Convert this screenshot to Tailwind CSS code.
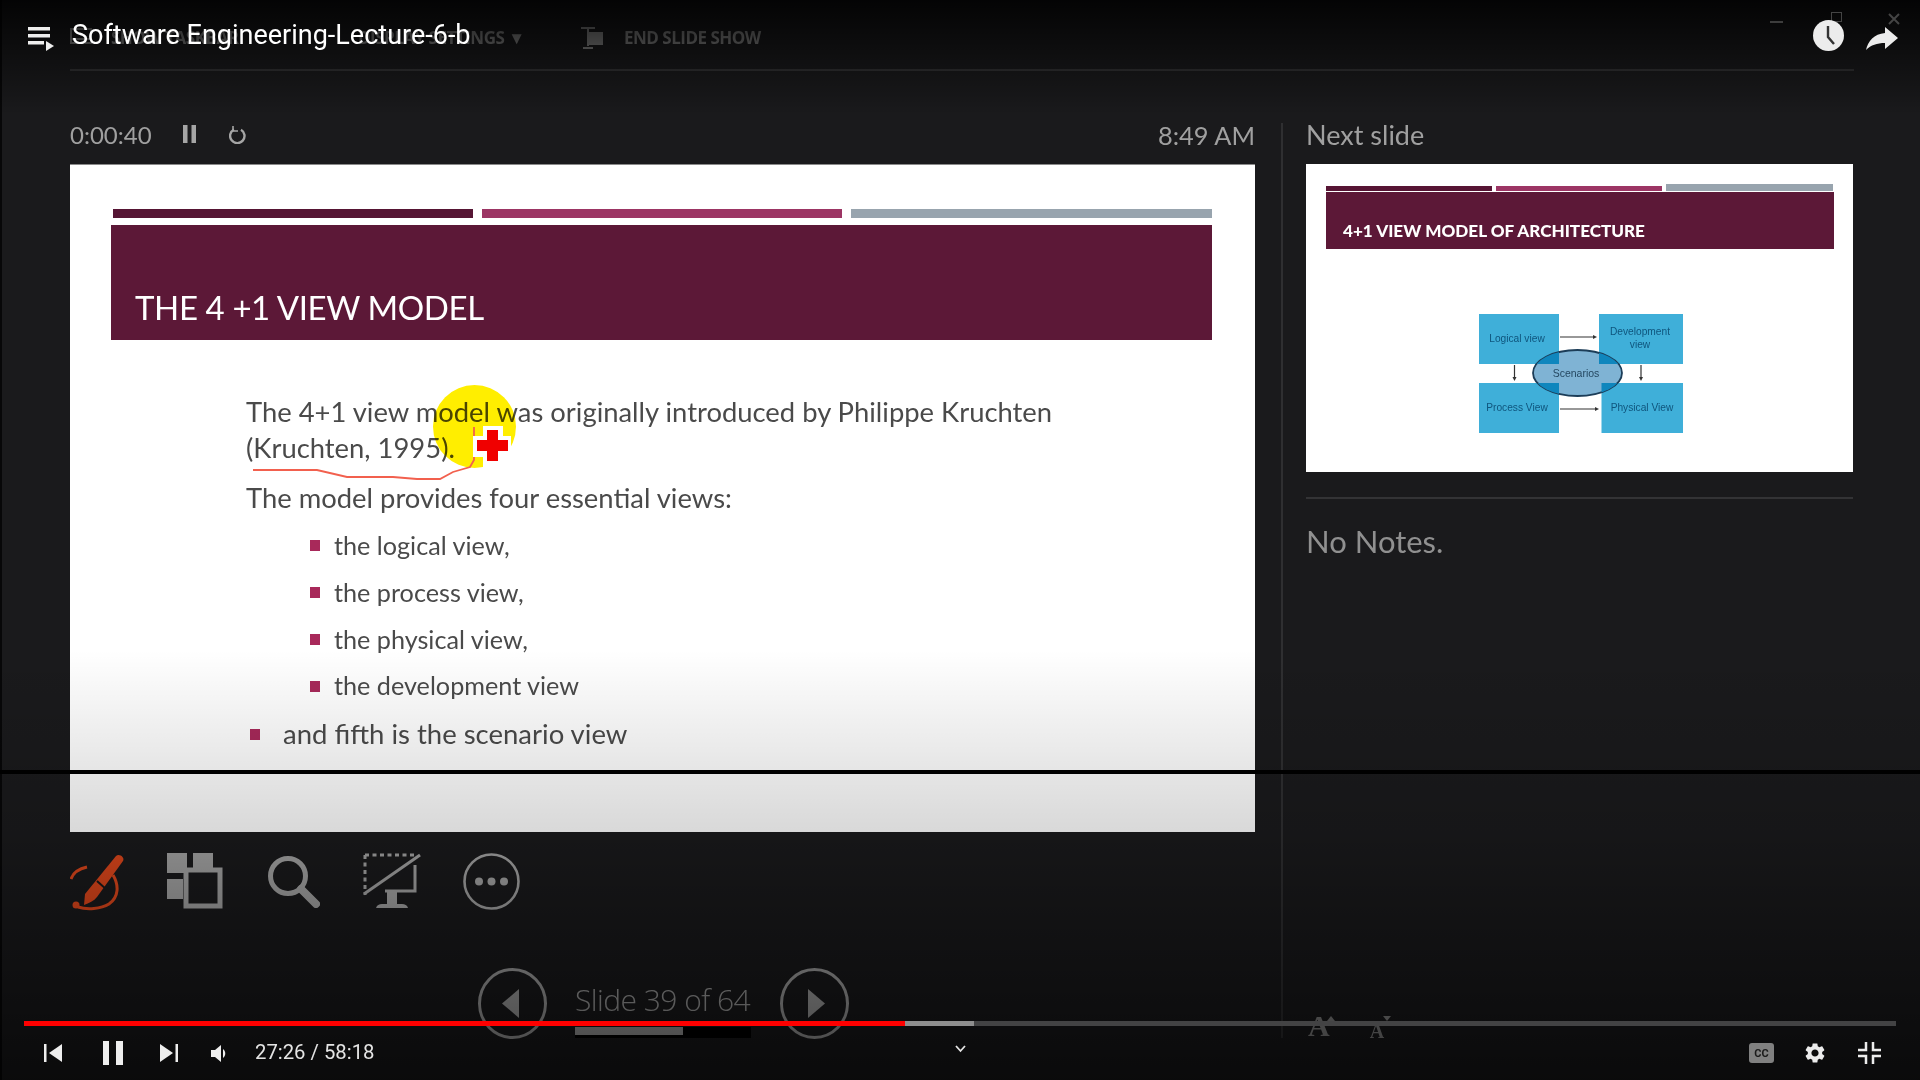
<!DOCTYPE html>
<html lang="en">
  <head>
    <meta charset="UTF-8" />
    <title>Software Engineering-Lecture-6-b</title>
    <script src="https://cdn.jsdelivr.net/npm/@tailwindcss/browser@4"></script>
  </head>
  <body class="bg-black">
    <div class="relative w-[1920px] h-[1080px] overflow-hidden bg-[#1a1a1c] pl-[70px] pr-[66px] font-['Lato',sans-serif]">
      <!-- presenter view: top menu -->
      <div class="h-[71px] border-b-2 border-[#333335] flex items-center pt-[7px] text-[#868686] font-['Open_Sans',sans-serif] font-bold text-[17px] tracking-[-0.5px]">
        <svg class="w-[23px] h-[22px]" viewBox="0 0 23 22" fill="none" stroke="#868686" stroke-width="2"><rect x="1" y="2" width="20" height="14" /><path d="M1 12h20" /></svg>
        <span class="ml-[18px] w-[215px]">SHOW TASKBAR</span>
        <span class="w-[190px] pl-[32px] whitespace-nowrap">DISPLAY SETTINGS ▼</span>
        <svg class="ml-[65px] w-[22px] h-[24px]" viewBox="0 0 22 24" fill="none" stroke="#8a8a8a" stroke-width="2"><path d="M0 2h14M7 2v18M2 22h10" /><rect x="9" y="7" width="12" height="11" fill="#8a8a8a" /></svg>
        <span class="ml-[21px]">END SLIDE SHOW</span>
      </div>

      <div class="flex h-[915px] mt-[52px]">
        <!-- current slide column -->
        <div class="w-[1185px]">
          <div class="h-[41px] flex items-start text-[#a0a0a0] leading-[24px]">
            <span class="text-[24px]">0:00:40</span>
            <svg class="ml-[31px] mt-[2px] w-[13px] h-[18px]" viewBox="0 0 13 18" fill="#a5a5a5"><rect width="4.500" height="18" /><rect x="8.500" width="4.500" height="18" /></svg>
            <svg class="ml-[33px] mt-[2px] w-[18px] h-[19px]" viewBox="0 0 18 19" fill="none" stroke="#a5a5a5" stroke-width="2.400"><path d="M5 4.500a7.200 7.200 0 1 0 7 .2" /><path d="M4 1v5h5" stroke-width="1.600" /></svg>
            <span class="ml-auto text-[25.4px]">8:49 AM</span>
          </div>

          <div class="relative h-[668px] bg-white border-t border-[#8a8a8a] pt-[44px] pl-[41px]">
            <div class="flex gap-[9px] pl-[2px] w-[1101px]">
              <div class="w-[360px] h-[9px] bg-[#561534]"></div>
              <div class="w-[360px] h-[9px] bg-[#9c3564]"></div>
              <div class="w-[361px] h-[9px] bg-[#98a4ae]"></div>
            </div>
            <div class="mt-[7px] w-[1101px] h-[115px] bg-[#5c1837] flex items-center pl-[24px] pt-[50px] text-white text-[33px] tracking-[-0.4px] whitespace-nowrap">THE 4 +1 VIEW MODEL</div>

            <div class="mt-[54px] ml-[135px] text-[#4a4a4a]">
              <p class="text-[27.4px] leading-[36px] whitespace-nowrap">The 4+1 view model was originally introduced by Philippe Kruchten<br />(Kruchten, 1995).</p>
              <p class="mt-[14px] text-[27.4px] leading-[36px] whitespace-nowrap">The model provides four essential views:</p>
              <ul class="mt-[6px] ml-[64px] text-[25.2px]">
                <li class="h-[47px] flex items-center gap-[14px]"><i class="w-[10px] h-[11px] bg-[#a8295a]"></i>the logical view,</li>
                <li class="h-[47px] flex items-center gap-[14px]"><i class="w-[10px] h-[11px] bg-[#a8295a]"></i>the process view,</li>
                <li class="h-[47px] flex items-center gap-[14px]"><i class="w-[10px] h-[11px] bg-[#a8295a]"></i>the physical view,</li>
                <li class="h-[46px] flex items-center gap-[14px]"><i class="w-[10px] h-[11px] bg-[#a8295a]"></i>the development view</li>
              </ul>
              <div class="mt-[7px] ml-[4px] h-[36px] flex items-center gap-[23px] text-[27.5px]"><i class="w-[10px] h-[11px] bg-[#a8295a]"></i>and fifth is the scenario view</div>
            </div>

            <!-- cursor highlight and pen stroke -->
            <div class="absolute left-[363px] top-[220px] w-[83px] h-[83px] rounded-full bg-[#ffee00] mix-blend-multiply"></div>
            <svg class="absolute -left-px top-0 w-[520px] h-[340px]" viewBox="0 0 520 340" fill="none">
              <path d="M184 305L248 305L278 312L324 312L348 314L371 314L384 307L401 302L405 295L405 262" stroke="#f2604e" stroke-width="1.800" />
              <path d="M404 271h10v-10h20v10h8v21h-8v10h-20v-10h-10z" fill="#fff" />
              <path d="M408 275h10v-10h11v10h10v11h-10v10h-11v-10h-10z" fill="#f00000" />
            </svg>
          </div>

          <!-- tools -->
          <div class="flex mt-[21px] h-[58px]">
            <svg class="w-[58px] h-[58px]" viewBox="0 0 58 58" fill="none">
              <path d="M17 14C8 16 3 20 1 26M43 22c6 10 6 22-4 29-8 5-22 6-31 3" stroke="#e2481c" stroke-width="3" />
              <path d="M46 3c3-3 9 1 7 5L27 44c-3 4-8 6-13 8l1-11z" fill="#e2481c" />
              <path d="M27 28l10 9" stroke="#1a1a1c" stroke-width="2" />
              <circle cx="6" cy="52" r="3.500" fill="#e2481c" />
            </svg>
            <svg class="ml-[39px] w-[56px] h-[56px]" viewBox="0 0 56 56" fill="none">
              <rect x="0" y="0" width="20" height="20" fill="#a6a6a6" /><rect x="26" y="0" width="20" height="16" fill="#a6a6a6" /><rect x="0" y="26" width="16" height="20" fill="#a6a6a6" />
              <rect x="19" y="17" width="34" height="36" stroke="#a6a6a6" stroke-width="5" fill="#1a1a1c" />
            </svg>
            <svg class="ml-[45px] mt-[3px] w-[52px] h-[52px]" viewBox="0 0 52 52" fill="none" stroke="#a6a6a6">
              <circle cx="20" cy="20" r="17.500" stroke-width="5" />
              <path d="M33 33l15 15" stroke-width="8" stroke-linecap="round" />
            </svg>
            <svg class="ml-[43px] w-[58px] h-[57px]" viewBox="0 0 58 57" fill="none" stroke="#a6a6a6">
              <path d="M2 2h52M2 2v40" stroke-width="3" stroke-dasharray="4 3.500" />
              <path d="M1 41L57 2" stroke-width="3" />
              <path d="M52 12v26H22" stroke-width="3" />
              <path d="M24 38h10v13H24z" fill="#a6a6a6" stroke="none" />
              <path d="M13 55c1-3 3-4 6-4h20c3 0 5 1 6 4z" fill="#a6a6a6" stroke="none" />
            </svg>
            <svg class="ml-[42px] w-[57px] h-[57px]" viewBox="0 0 57 57" fill="none">
              <circle cx="28.500" cy="28.500" r="27" stroke="#a6a6a6" stroke-width="2.600" />
              <circle cx="16" cy="28.500" r="4" fill="#a6a6a6" /><circle cx="28.500" cy="28.500" r="4" fill="#a6a6a6" /><circle cx="41" cy="28.500" r="4" fill="#a6a6a6" />
            </svg>
          </div>

          <!-- slide navigation -->
          <div class="flex items-start mt-[57px] pl-[408px]">
            <svg class="w-[69px] h-[71px]" viewBox="0 0 69 71" fill="none"><ellipse cx="34.500" cy="35.500" rx="33" ry="34" stroke="#a6a6a6" stroke-width="3" /><path d="M41 21v29L24 35.500z" fill="#a6a6a6" /></svg>
            <div class="ml-[28px] w-[176px]">
              <div class="h-[59px] pt-[3px] flex items-center text-[#a6a6a6] text-[30px] font-['Open_Sans',sans-serif] font-light tracking-[-0.55px] whitespace-nowrap">Slide 39 of 64</div>
              <div class="h-[11px] bg-black"><div class="w-[108px] h-[8px] bg-[#a6a6a6]"></div></div>
            </div>
            <svg class="ml-[29px] w-[69px] h-[71px]" viewBox="0 0 69 71" fill="none"><ellipse cx="34.500" cy="35.500" rx="33" ry="34" stroke="#a6a6a6" stroke-width="3" /><path d="M28 21v29l17-14.500z" fill="#a6a6a6" /></svg>
          </div>
        </div>

        <div class="w-[2px] bg-[#2f2f31] ml-[26px]"></div>

        <!-- next slide column -->
        <div class="ml-[23px] w-[547px] flex flex-col">
          <div class="h-[41px] text-[#a0a0a0] text-[27px] leading-[23px]">Next slide</div>
          <div class="h-[308px] bg-white pt-[20px]">
            <div class="flex gap-[4px] ml-[20px] items-end">
              <div class="w-[166px] h-[5px] bg-[#561534]"></div>
              <div class="w-[166px] h-[5px] bg-[#9c3564]"></div>
              <div class="w-[167px] h-[7px] bg-[#98a4ae]"></div>
            </div>
            <div class="mt-[1px] ml-[20px] w-[508px] h-[57px] bg-[#5c1837] flex items-center pl-[17px] pt-[20px] text-white text-[17.1px] font-black whitespace-nowrap">4+1 VIEW MODEL OF ARCHITECTURE</div>
            <svg class="ml-[173px] mt-[65px] w-[204px] h-[119px] font-['Liberation_Sans',sans-serif] overflow-visible" viewBox="0 0 204 119" fill="none">
              <defs><clipPath id="scenario-clip"><ellipse cx="98.500" cy="59" rx="44.500" ry="23" /></clipPath></defs>
              <rect width="80" height="50" fill="#3fafd9" /><rect x="120" width="84" height="50" fill="#3fafd9" /><rect y="69" width="80" height="50" fill="#3fafd9" /><rect x="122.500" y="69" width="81.500" height="50" fill="#3fafd9" />
              <ellipse cx="98.500" cy="59" rx="44.500" ry="23" fill="#7fb3d4" stroke="#1c3d58" stroke-width="1.800" />
              <g clip-path="url(#scenario-clip)" fill="#0f86bd"><rect width="80" height="50" /><rect x="120" width="84" height="50" /><rect y="69" width="80" height="50" /><rect x="122.500" y="69" width="81.500" height="50" /></g>
              <path d="M81 23h35M81 95h37M35.500 51v14M162 51v14" stroke="#333" stroke-width="1.200" />
              <path d="M118 23l-4-2v4zM120 95l-4-2v4zM35.500 67l-2-4h4zM162 67l-2-4h4z" fill="#333" />
              <g fill="#0f557d" font-size="10.200" text-anchor="middle">
                <text x="38" y="28">Logical view</text>
                <text x="161" y="21">Development</text>
                <text x="161" y="34">view</text>
                <text x="38" y="97">Process View</text>
                <text x="163" y="97">Physical View</text>
                <text x="97" y="62.500" fill="#254861" font-size="10.500">Scenarios</text>
              </g>
            </svg>
          </div>
          <div class="mt-[25px] h-[2px] bg-[#333335]"></div>
          <div class="mt-[24px] text-[#909090] text-[31px] leading-[36px]">No Notes.</div>
          <div class="mt-auto -mb-[3px] flex items-end font-['Liberation_Serif',serif] font-bold text-[#8c8c8c] leading-none h-[19px]">
            <div class="relative ml-[2px] text-[30px]">A<i class="absolute -right-[5px] top-[5px] w-0 h-0 border-x-[4px] border-x-transparent border-b-[5px] border-b-[#8c8c8c]"></i></div>
            <div class="relative ml-[40px] text-[20px]">A<i class="absolute -right-[7px] -top-[5px] w-0 h-0 border-x-[4px] border-x-transparent border-t-[5px] border-t-[#8c8c8c]"></i></div>
          </div>
        </div>
      </div>

      <!-- recording glitch line -->
      <div class="absolute left-0 right-0 top-[770px] h-[4px] bg-black"></div>
      <div class="absolute left-0 top-0 bottom-0 w-[2px] bg-black/70"></div>

      <!-- player shades -->
      <div class="absolute left-0 right-0 top-0 h-[115px] bg-linear-to-b from-black/85 to-transparent"></div>
      <div class="absolute left-0 right-0 top-[650px] h-[430px] bg-linear-to-b from-transparent via-black/15 via-[42%] to-black/60"></div>

      <!-- ghost window buttons behind the player icons -->
      <div class="absolute left-[1770px] top-[21px] w-[13px] h-[2px] bg-[#3d3d3d]"></div>
      <div class="absolute left-[1831px] top-[12px] w-[11px] h-[10px] border border-[#444]"></div>
      <svg class="absolute left-[1888px] top-[13px] w-[12px] h-[12px]" viewBox="0 0 12 12" stroke="#444" stroke-width="2"><path d="M1 1l10 10M11 1L1 11" /></svg>

      <!-- player top -->
      <div class="absolute left-[28px] right-[22px] top-[20px] h-[31px] flex items-center text-white font-['Roboto',sans-serif]">
        <svg class="w-[26px] h-[24px] mt-[6px]" viewBox="0 0 26 24" fill="#eee"><rect y="0" width="22" height="3.500" /><rect y="7" width="22" height="3.500" /><rect y="14" width="16" height="3.500" /><path d="M18 14l8 5-8 5z" /></svg>
        <span class="ml-[18px] text-[27px] leading-[31px] whitespace-nowrap">Software Engineering-Lecture-6-b</span>
        <svg class="ml-auto w-[31px] h-[31px]" viewBox="0 0 31 31"><circle cx="15.500" cy="15.500" r="15.500" fill="#ececec" /><path d="M15 6v11l6 7" fill="none" stroke="#333" stroke-width="2.400" /></svg>
        <svg class="ml-[22px] w-[32px] h-[23px] mt-[6px]" viewBox="0 0 32 23" fill="#ececec"><path d="M19 6V0l13 11-13 11v-6C11 16 5 18 0 23 2 14 8 7 19 6z" /></svg>
      </div>

      <!-- player bottom -->
      <div class="absolute left-0 right-0 top-[1021px] font-['Roboto',sans-serif]">
        <div class="ml-[24px] w-[1872px] h-[5px] flex bg-[#434344]">
          <div class="w-[881px] bg-[#ff0000]"></div>
          <div class="w-[69px] bg-[#8e8e8e]"></div>
        </div>
        <div class="flex items-center h-[54px] pl-[44px] pr-[39px] text-[#e4e4e4]">
          <svg class="w-[18px] h-[18px]" viewBox="0 0 18 18" fill="#eee"><rect width="2.500" height="18" /><path d="M18 0v18L5 9z" /></svg>
          <svg class="ml-[41px] w-[20px] h-[24px]" viewBox="0 0 20 24" fill="#eee"><rect width="6" height="24" /><rect x="13" width="7" height="24" /></svg>
          <svg class="ml-[37px] w-[18px] h-[18px]" viewBox="0 0 18 18" fill="#eee"><path d="M0 0v18l13-9z" /><rect x="15.500" width="2.500" height="18" /></svg>
          <svg class="ml-[33px] w-[17px] h-[17px]" viewBox="0 0 17 17" fill="#eee"><path d="M0 5h4l6-5v17l-6-5H0z" /><path d="M12 4c3 2 3 7 0 9z" /></svg>
          <span class="ml-[27px] mb-[2px] text-[20.3px] leading-none whitespace-nowrap">27:26 / 58:18</span>
          <svg class="absolute left-[955px] top-[24px] w-[11px] h-[8px]" viewBox="0 0 11 8" fill="none" stroke="#e4e4e4" stroke-width="1.800"><path d="M1 1l4.500 5L10 1" /></svg>
          <div class="ml-auto w-[25px] h-[20px] rounded-[3px] bg-[#808080] flex items-center justify-center text-[11px] font-bold text-[#1b1b1b] leading-none">CC</div>
          <svg class="ml-[29px] w-[24px] h-[24px]" viewBox="0 0 24 24" fill="#ececec"><path d="M19.140 12.940c.04-.3.06-.61.06-.94 0-.32-.02-.64-.07-.94l2.030-1.580c.18-.14.23-.41.12-.61l-1.920-3.320c-.12-.22-.37-.29-.59-.22l-2.390.96c-.5-.38-1.030-.7-1.620-.94L14.400 2.810c-.04-.24-.24-.41-.48-.41h-3.840c-.24 0-.43.17-.47.41L9.250 5.350c-.59.24-1.130.57-1.620.94L5.240 5.330c-.22-.08-.47 0-.59.22L2.740 8.870c-.12.21-.08.47.12.61l2.030 1.580c-.05.3-.09.63-.09.94s.02.64.07.94l-2.030 1.580c-.18.14-.23.41-.12.61l1.920 3.320c.12.22.37.29.59.22l2.390-.96c.5.38 1.030.7 1.620.94l.36 2.540c.05.24.24.41.48.41h3.840c.24 0 .44-.17.47-.41l.36-2.540c.59-.24 1.130-.56 1.620-.94l2.390.96c.22.08.47 0 .59-.22l1.920-3.320c.12-.22.07-.47-.12-.61l-2.010-1.580zM12 15.600c-1.980 0-3.600-1.620-3.600-3.600s1.620-3.600 3.600-3.600 3.600 1.620 3.600 3.600-1.620 3.600-3.600 3.600z" /></svg>
          <svg class="ml-[31px] w-[23px] h-[22px]" viewBox="0 0 23 22" fill="none" stroke="#ececec" stroke-width="2.500"><path d="M8 0v8H0M15 0v8h8M8 22v-8H0M15 22v-8h8" /></svg>
        </div>
      </div>
    </div>
  </body>
</html>
